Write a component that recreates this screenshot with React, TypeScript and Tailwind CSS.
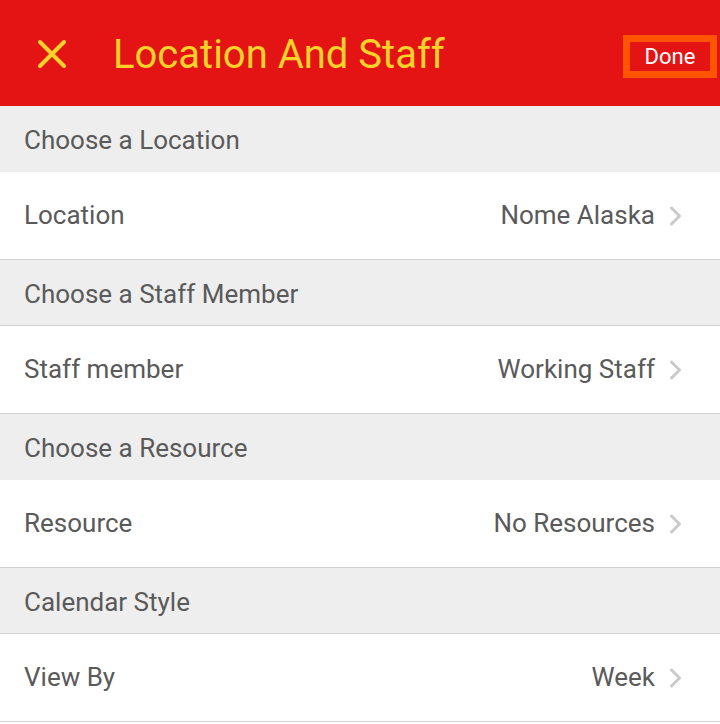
import React from "react";

const font = { fontFamily: "Roboto, 'Noto Sans', sans-serif" };

function Chevron() {
  return (
    <svg width="14" height="20" viewBox="0 0 14 20" className="ml-[14px] shrink-0">
      <path d="M2.5 2 L10.5 10 L2.5 18" fill="none" stroke="#cacaca" strokeWidth="3" strokeLinecap="round" strokeLinejoin="round" />
    </svg>
  );
}

function Section({ title, border }: { title: string; border?: boolean }) {
  return (
    <div className={`h-[66px] bg-[#eeeeee] flex items-center pl-6 pt-[3px] text-[26px] text-[#5a5a5a] ${border ? "border-b border-[#d2d2d2]" : ""}`}>
      {title}
    </div>
  );
}

function Row({ label, value }: { label: string; value: string }) {
  return (
    <div className="h-[88px] bg-white border-b border-[#d2d2d2] flex items-center pl-6 pr-[37px] text-[26px] text-[#5a5a5a]">
      <span className="flex-1">{label}</span>
      <span>{value}</span>
      <Chevron />
    </div>
  );
}

export default function App() {
  return (
    <div className="w-[720px] h-[724px] bg-white overflow-hidden" style={font}>
      <div className="h-[106px] bg-[#e41414] flex items-center">
        <svg width="30" height="30" viewBox="0 0 30 30" className="ml-[37px] mt-[2px]">
          <path d="M3 3 L27 27 M27 3 L3 27" stroke="#fcd22a" strokeWidth="4" strokeLinecap="round" />
        </svg>
        <div className="ml-[46px] mt-[4px] text-[40px] text-[#fcd22a] flex-1 leading-none">Location And Staff</div>
        <div className="mr-[3px] mt-[7px] w-[94px] h-[43px] border-[7px] border-[#ff5500] flex items-center justify-center text-white text-[22px] leading-none">
          Done
        </div>
      </div>
      <Section title="Choose a Location" />
      <Row label="Location" value="Nome Alaska" />
      <Section title="Choose a Staff Member" border />
      <Row label="Staff member" value="Working Staff" />
      <Section title="Choose a Resource" />
      <Row label="Resource" value="No Resources" />
      <Section title="Calendar Style" border />
      <Row label="View By" value="Week" />
    </div>
  );
}
